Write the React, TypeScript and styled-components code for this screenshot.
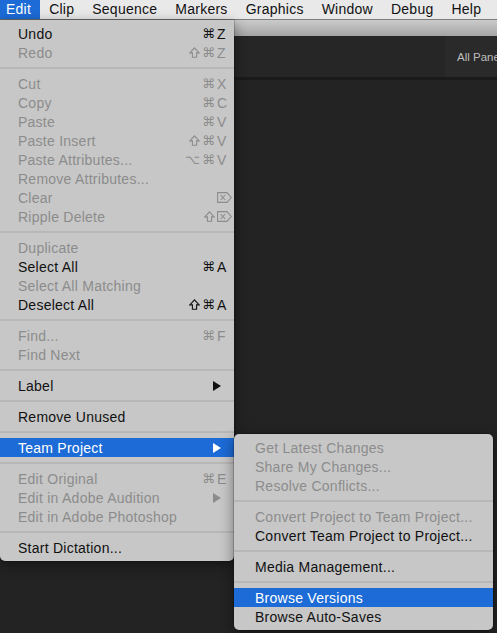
import React from 'react';
import styled, { createGlobalStyle } from 'styled-components';

const Global = createGlobalStyle`
  html, body { margin: 0; padding: 0; background: #232323; }
  body {
    width: 497px; height: 633px; overflow: hidden;
    font-family: "Liberation Sans", "Helvetica Neue", Arial, "DejaVu Sans", sans-serif;
    -webkit-font-smoothing: antialiased;
  }
`;

const BLUE = '#1c6bd6';

const Screen = styled.div`
  position: relative;
  width: 497px;
  height: 633px;
  overflow: hidden;
  background: #232323;
  display: flex;
  flex-direction: column;
`;

const MenuBar = styled.div`
  height: 20px;
  box-sizing: border-box;
  border-bottom: 1px solid #7d7d7d;
  background: #e9e9e9;
  display: flex;
  font-size: 14px;
  letter-spacing: 0.25px;
  color: #111;
`;

const Titles = styled.div`
  display: flex;
  margin-left: -3px;
`;

const Title = styled.div<{ $active?: boolean }>`
  padding: 0 9px;
  line-height: 19px;
  white-space: nowrap;
  background: ${(p) => (p.$active ? BLUE : 'transparent')};
  color: ${(p) => (p.$active ? '#fff' : '#111')};
`;

const TitleStrip = styled.div`
  height: 16px;
  background: linear-gradient(#cbcbcb, #a5a5a5);
`;

const PanelHeader = styled.div`
  height: 41px;
  background: #262626;
  display: flex;
  justify-content: flex-end;
`;

const HeaderTab = styled.div`
  width: 40px;
  background: #2a2a2a;
  display: flex;
  align-items: center;
  padding-left: 12px;
  font-size: 11.5px;
  color: #bdbdbd;
  white-space: nowrap;
  overflow: hidden;
`;

const Divider = styled.div`
  height: 3px;
  background: #1a1a1a;
`;

const Body = styled.div`
  flex: 1;
  background: #232323;
`;

const Menu = styled.div<{ $left: number; $top: number; $width: number; $sub?: boolean }>`
  position: absolute;
  left: ${(p) => p.$left}px;
  top: ${(p) => p.$top}px;
  width: ${(p) => p.$width}px;
  box-sizing: border-box;
  padding: 4px 0;
  background: #c7c7c7;
  border-radius: ${(p) => (p.$sub ? '5px' : '0 0 5px 5px')};
  box-shadow: 0 4px 14px rgba(0, 0, 0, 0.45), 0 0 0 0.5px rgba(0, 0, 0, 0.35);
  font-size: 14px;
`;

const Row = styled.div<{ $disabled?: boolean; $active?: boolean; $indent: number }>`
  height: 19px;
  display: flex;
  align-items: center;
  padding-left: ${(p) => p.$indent}px;
  white-space: nowrap;
  background: ${(p) => (p.$active ? BLUE : 'transparent')};
  color: ${(p) => (p.$active ? '#fff' : p.$disabled ? '#8c8c8c' : '#111')};
`;

const Label = styled.span`
  flex: 1;
  letter-spacing: 0.25px;
`;

const Shortcut = styled.span`
  display: flex;
  align-items: center;
  margin-right: 1px;
  font-family: "DejaVu Sans", "Liberation Sans", sans-serif;
  font-size: 13px;
`;

const Mods = styled.span`
  display: flex;
  align-items: center;
  gap: 2px;
  margin-right: 2px;
`;

const Key = styled.span`
  width: 16px;
  display: flex;
  align-items: center;
  font-family: "Liberation Sans", "DejaVu Sans", sans-serif;
  font-size: 14px;
`;

const Glyph = styled.svg<{ $w: number }>`
  width: ${(p) => p.$w}px;
  height: 11px;
  fill: none;
  stroke: currentColor;
  stroke-width: 1.1;
  stroke-linejoin: miter;
`;

const Arrow = styled.svg`
  width: 8px;
  height: 10px;
  margin-right: 13px;
  fill: currentColor;
`;

const Sep = styled.div`
  height: 2px;
  margin: 5px 0;
  background: #b7b7b7;
`;

const Shift = () => (
  <Glyph $w={11} viewBox="0 0 11 11">
    <path d="M5.5 0.8 L10.2 5.9 H7.6 V10.2 H3.4 V5.9 H0.8 Z" />
  </Glyph>
);

const Del = () => (
  <Glyph $w={15} viewBox="0 0 15 11">
    <path d="M0.6 0.6 H10 L14.3 5.5 L10 10.4 H0.6 Z" />
    <path d="M3.6 3 L8.2 8 M8.2 3 L3.6 8" />
  </Glyph>
);

type Mod = 'shift' | 'cmd' | 'opt';

type Item =
  | { sep: true }
  | { label: string; disabled?: boolean; active?: boolean; mods?: Mod[]; key?: string; sub?: boolean };

const S = { sep: true as const };

const editItems: Item[] = [
  { label: 'Undo', mods: ['cmd'], key: 'Z' },
  { label: 'Redo', disabled: true, mods: ['shift', 'cmd'], key: 'Z' },
  S,
  { label: 'Cut', disabled: true, mods: ['cmd'], key: 'X' },
  { label: 'Copy', disabled: true, mods: ['cmd'], key: 'C' },
  { label: 'Paste', disabled: true, mods: ['cmd'], key: 'V' },
  { label: 'Paste Insert', disabled: true, mods: ['shift', 'cmd'], key: 'V' },
  { label: 'Paste Attributes...', disabled: true, mods: ['opt', 'cmd'], key: 'V' },
  { label: 'Remove Attributes...', disabled: true },
  { label: 'Clear', disabled: true, mods: [], key: 'del' },
  { label: 'Ripple Delete', disabled: true, mods: ['shift'], key: 'del' },
  S,
  { label: 'Duplicate', disabled: true },
  { label: 'Select All', mods: ['cmd'], key: 'A' },
  { label: 'Select All Matching', disabled: true },
  { label: 'Deselect All', mods: ['shift', 'cmd'], key: 'A' },
  S,
  { label: 'Find...', disabled: true, mods: ['cmd'], key: 'F' },
  { label: 'Find Next', disabled: true },
  S,
  { label: 'Label', sub: true },
  S,
  { label: 'Remove Unused' },
  S,
  { label: 'Team Project', sub: true, active: true },
  S,
  { label: 'Edit Original', disabled: true, mods: ['cmd'], key: 'E' },
  { label: 'Edit in Adobe Audition', disabled: true, sub: true },
  { label: 'Edit in Adobe Photoshop', disabled: true },
  S,
  { label: 'Start Dictation...' },
];

const teamItems: Item[] = [
  { label: 'Get Latest Changes', disabled: true },
  { label: 'Share My Changes...', disabled: true },
  { label: 'Resolve Conflicts...', disabled: true },
  S,
  { label: 'Convert Project to Team Project...', disabled: true },
  { label: 'Convert Team Project to Project...' },
  S,
  { label: 'Media Management...' },
  S,
  { label: 'Browse Versions', active: true },
  { label: 'Browse Auto-Saves' },
];

function renderMod(m: Mod, i: number) {
  if (m === 'shift') return <Shift key={i} />;
  return <span key={i}>{m === 'cmd' ? '⌘' : '⌥'}</span>;
}

function MenuList({ items, indent }: { items: Item[]; indent: number }) {
  return (
    <>
      {items.map((it, i) =>
        'sep' in it ? (
          <Sep key={i} />
        ) : (
          <Row key={i} $disabled={it.disabled} $active={it.active} $indent={indent}>
            <Label>{it.label}</Label>
            {it.key !== undefined && (
              <Shortcut>
                <Mods>{(it.mods || []).map(renderMod)}</Mods>
                <Key>{it.key === 'del' ? <Del /> : it.key}</Key>
              </Shortcut>
            )}
            {it.sub && (
              <Arrow viewBox="0 0 8 10">
                <polygon points="0,0 8,5 0,10" />
              </Arrow>
            )}
          </Row>
        )
      )}
    </>
  );
}

export default function App() {
  const titles = ['Edit', 'Clip', 'Sequence', 'Markers', 'Graphics', 'Window', 'Debug', 'Help'];
  return (
    <Screen>
      <Global />
      <MenuBar>
        <Titles>
          {titles.map((t) => (
            <Title key={t} $active={t === 'Edit'}>
              {t}
            </Title>
          ))}
        </Titles>
      </MenuBar>
      <TitleStrip />
      <PanelHeader>
        <HeaderTab>All Panels</HeaderTab>
      </PanelHeader>
      <Divider />
      <Body />
      <Menu $left={0} $top={20} $width={234}>
        <MenuList items={editItems} indent={18} />
      </Menu>
      <Menu $left={234} $top={434} $width={259} $sub>
        <MenuList items={teamItems} indent={21} />
      </Menu>
    </Screen>
  );
}
